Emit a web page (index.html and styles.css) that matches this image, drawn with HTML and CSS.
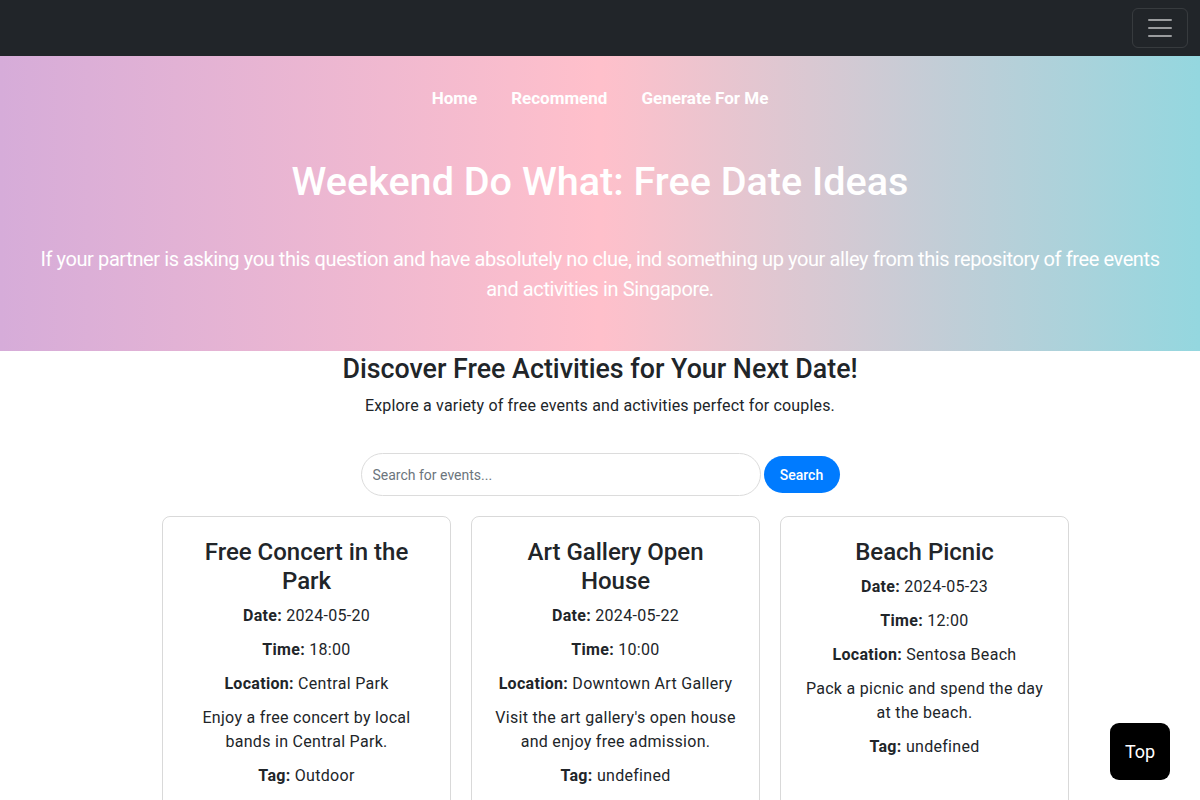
FILE: index.html
```html
<!DOCTYPE html>
<html lang="en">
<head>
<meta charset="utf-8">
<title>Weekend Do What: Free Date Ideas</title>
<link rel="stylesheet" href="styles.css">
</head>
<body>
<header class="topbar">
  <button class="toggler" aria-label="Toggle navigation">
    <svg width="30" height="30" viewBox="0 0 30 30"><path d="M4 7h22M4 15h22M4 23h22" stroke="rgba(255,255,255,0.55)" stroke-width="2" stroke-linecap="round" fill="none"/></svg>
  </button>
</header>
<section class="hero">
  <nav class="hero-nav">
    <a href="#">Home</a>
    <a href="#">Recommend</a>
    <a href="#">Generate For Me</a>
  </nav>
  <h1 class="hero-title">Weekend Do What: Free Date Ideas</h1>
  <p class="hero-lead">If your partner is asking you this question and have absolutely no clue, ind something up your alley from this repository of free events and activities in Singapore.</p>
</section>
<main class="content">
  <h2 class="section-title">Discover Free Activities for Your Next Date!</h2>
  <p class="section-sub">Explore a variety of free events and activities perfect for couples.</p>
  <form class="search">
    <input class="search-input" type="text" placeholder="Search for events...">
    <button class="search-btn" type="button">Search</button>
  </form>
  <div class="cards-wrap">
    <div class="cards">
      <article class="card">
        <h3 class="card-title">Free Concert in the Park</h3>
        <p><b>Date:</b> 2024-05-20</p>
        <p><b>Time:</b> 18:00</p>
        <p><b>Location:</b> Central Park</p>
        <p>Enjoy a free concert by local bands in Central Park.</p>
        <p><b>Tag:</b> Outdoor</p>
      </article>
      <article class="card">
        <h3 class="card-title">Art Gallery Open House</h3>
        <p><b>Date:</b> 2024-05-22</p>
        <p><b>Time:</b> 10:00</p>
        <p><b>Location:</b> Downtown Art Gallery</p>
        <p>Visit the art gallery's open house and enjoy free admission.</p>
        <p><b>Tag:</b> undefined</p>
      </article>
      <article class="card">
        <h3 class="card-title">Beach Picnic</h3>
        <p><b>Date:</b> 2024-05-23</p>
        <p><b>Time:</b> 12:00</p>
        <p><b>Location:</b> Sentosa Beach</p>
        <p>Pack a picnic and spend the day at the beach.</p>
        <p><b>Tag:</b> undefined</p>
      </article>
    </div>
  </div>
</main>
<button class="top-btn" type="button">Top</button>
</body>
</html>
```
FILE: styles.css
```css
* { box-sizing: border-box; }
html, body { margin: 0; padding: 0; }
body {
  font-family: Roboto, Inter, "Noto Sans", "Liberation Sans", sans-serif;
  color: #212529;
  background: #fff;
  font-size: 16px;
  line-height: 1.5;
}
.topbar {
  height: 56px;
  background: #212529;
  display: flex;
  justify-content: flex-end;
  align-items: center;
  padding: 0 12px;
}
.toggler {
  width: 56px;
  height: 40px;
  background: transparent;
  border: 1px solid rgba(255,255,255,0.1);
  border-radius: 6px;
  display: flex;
  align-items: center;
  justify-content: center;
  padding: 0;
}
.hero {
  height: 295px;
  background: linear-gradient(to right, #d6acd9 0%, #ffc0cb 50%, #94d7df 100%);
  color: #fff;
  text-align: center;
  padding: 22px 0 0;
}
.hero-nav {
  display: flex;
  justify-content: center;
  gap: 2px;
}
.hero-nav a {
  color: #fff;
  text-decoration: none;
  font-weight: 700;
  padding: 8px 16px;
  line-height: 24px;
  font-size: 17px;
}
.hero-title {
  margin: 40px 0 0;
  font-size: 39.6px;
  line-height: 48px;
  font-weight: 500;
}
.hero-lead {
  margin: 38px 0 0;
  font-size: 20px;
  line-height: 30px;
  letter-spacing: -0.4px;
  padding: 0 30px;
}
.content { text-align: center; }
.section-title {
  margin: 1px 0 8px;
  font-size: 26.8px;
  line-height: 34px;
  font-weight: 500;
}
.section-sub {
  margin: 0 0 35px;
  font-size: 16px;
  line-height: 24px;
  letter-spacing: 0.17px;
}
.search {
  display: flex;
  justify-content: center;
  align-items: center;
  gap: 3px;
  margin-bottom: 20px;
}
.search-input {
  width: 400px;
  height: 43px;
  border: 1px solid #dcdcdc;
  border-radius: 22px;
  padding: 0 11px;
  font-family: inherit;
  font-size: 14px;
  color: #212529;
}
.search-input::placeholder { color: #6c757d; }
.search-btn {
  width: 76px;
  height: 37px;
  border: none;
  border-radius: 19px;
  background: #007bff;
  color: #fff;
  font-family: inherit;
  font-size: 14px;
  font-weight: 500;
  padding: 0;
}
.cards-wrap {
  width: 940px;
  margin: 0 auto;
  padding-left: 32px;
}
.cards {
  display: grid;
  grid-template-columns: repeat(3, 289px);
  gap: 20px;
}
.card {
  border: 1px solid rgba(0,0,0,0.15);
  border-radius: 8px;
  padding: 21px 20px 60px;
  min-height: 300px;
}
.card-title {
  margin: 0 0 8px;
  font-size: 24px;
  line-height: 29px;
  font-weight: 500;
}
.card p {
  margin: 0 0 10px;
  font-size: 16px;
  line-height: 24px;
  letter-spacing: 0.3px;
}
.card b { font-weight: 700; }
.top-btn {
  position: fixed;
  right: 30px;
  bottom: 20px;
  width: 60px;
  height: 57px;
  background: #000;
  color: #fff;
  border: none;
  border-radius: 9px;
  font-family: inherit;
  font-size: 18px;
}
```
